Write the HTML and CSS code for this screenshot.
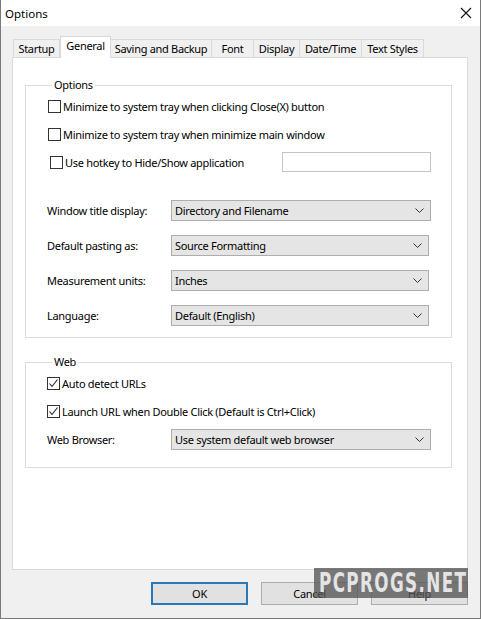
FILE: index.html
```html
<!DOCTYPE html>
<html lang="en">
<head>
	<meta charset="UTF-8">
	<title>Options</title>
	<link rel="stylesheet" href="styles.css">
</head>
<body>

	<!-- Janela de opções -->
	<div class="window">

		<!-- Barra de título -->
		<div class="titlebar">
			<span class="title">Options</span>
			<svg class="close" width="12" height="12" viewBox="0 0 12 12">
				<path d="M1 1 L11 11 M11 1 L1 11" stroke="#111" stroke-width="1.1" fill="none"/>
			</svg>
		</div>

		<div class="body">

			<!-- Abas -->
			<div class="tabs">
				<div class="tab">Startup</div>
				<div class="tab active">General</div>
				<div class="tab">Saving and Backup</div>
				<div class="tab">Font</div>
				<div class="tab">Display</div>
				<div class="tab">Date/Time</div>
				<div class="tab">Text Styles</div>
			</div>

			<div class="panel">

				<!-- Grupo Options -->
				<fieldset class="group group-options">
					<legend>Options</legend>

					<label class="check"><span class="box"></span>Minimize to system tray when clicking Close(X) button</label>
					<label class="check"><span class="box"></span>Minimize to system tray when minimize main window</label>
					<div class="check hotkey">
						<label class="check-inner"><span class="box"></span>Use hotkey to Hide/Show application</label>
						<div class="textbox"></div>
					</div>

					<div class="fields">
						<div class="field">
							<span class="field-label">Window title display:</span>
							<div class="combo"><span>Directory and Filename</span><svg class="chev" width="9" height="5" viewBox="0 0 9 5"><path d="M0.5 0.5 L4.5 4.5 L8.5 0.5" stroke="#333" fill="none"/></svg></div>
						</div>
						<div class="field">
							<span class="field-label">Default pasting as:</span>
							<div class="combo short"><span>Source Formatting</span><svg class="chev" width="9" height="5" viewBox="0 0 9 5"><path d="M0.5 0.5 L4.5 4.5 L8.5 0.5" stroke="#333" fill="none"/></svg></div>
						</div>
						<div class="field">
							<span class="field-label">Measurement units:</span>
							<div class="combo short"><span>Inches</span><svg class="chev" width="9" height="5" viewBox="0 0 9 5"><path d="M0.5 0.5 L4.5 4.5 L8.5 0.5" stroke="#333" fill="none"/></svg></div>
						</div>
						<div class="field">
							<span class="field-label">Language:</span>
							<div class="combo short"><span>Default (English)</span><svg class="chev" width="9" height="5" viewBox="0 0 9 5"><path d="M0.5 0.5 L4.5 4.5 L8.5 0.5" stroke="#333" fill="none"/></svg></div>
						</div>
					</div>
				</fieldset>

				<!-- Grupo Web -->
				<fieldset class="group group-web">
					<legend>Web</legend>

					<label class="check checked"><span class="box"><svg width="11" height="11" viewBox="0 0 11 11"><path d="M1.5 5.5 L4 8.5 L9.5 1.5" stroke="#222" stroke-width="1.1" fill="none"/></svg></span>Auto detect URLs</label>
					<label class="check checked"><span class="box"><svg width="11" height="11" viewBox="0 0 11 11"><path d="M1.5 5.5 L4 8.5 L9.5 1.5" stroke="#222" stroke-width="1.1" fill="none"/></svg></span>Launch URL when Double Click (Default is Ctrl+Click)</label>

					<div class="field">
						<span class="field-label">Web Browser:</span>
						<div class="combo"><span>Use system default web browser</span><svg class="chev" width="9" height="5" viewBox="0 0 9 5"><path d="M0.5 0.5 L4.5 4.5 L8.5 0.5" stroke="#333" fill="none"/></svg></div>
					</div>
				</fieldset>
			</div>

			<!-- Botões -->
			<div class="buttons">
				<div class="button default">OK</div>
				<div class="button">Cancel</div>
				<div class="button">Help</div>
			</div>
		</div>

		<!-- Marca d'água -->
		<div class="watermark"><span>PCPROGS.NET</span></div>
	</div>

</body>
</html>
```

FILE: styles.css
```css
	* {
		box-sizing: border-box;
	}

	body {
		margin: 0;
		font-family: "Noto Sans", "Open Sans", sans-serif;
		font-size: 11px;
		letter-spacing: -0.3px;
		color: #000000;
	}

	div.window {
		position: relative;
		width: 481px;
		height: 619px;
		background-color: #f0f0f0;
		border-left: 1px solid #7a7a7a;
		border-right: 1px solid #7a7a7a;
		border-bottom: 1px solid #7a7a7a;
		overflow: hidden;
	}

	/* barra de título */
	div.titlebar {
		height: 26px;
		background-color: #ffffff;
		display: flex;
		align-items: center;
		justify-content: space-between;
		padding: 0 8px 0 4px;
	}

	span.title {
		font-size: 11.5px;
		letter-spacing: 0;
	}

	div.body {
		padding: 10px 11px 0 11px;
	}

	/* abas */
	div.tabs {
		display: flex;
		align-items: flex-end;
		height: 21px;
		padding-left: 1px;
		position: relative;
		z-index: 1;
	}

	div.tab {
		height: 18px;
		line-height: 18px;
		border: 1px solid #d9d9d9;
		border-bottom: none;
		border-left: none;
		background-color: #f0f0f0;
		white-space: nowrap;
		text-align: center;
	}

	div.tab:first-child {
		border-left: 1px solid #d9d9d9;
	}

	/* larguras das abas */
	div.tab:nth-child(1) { width: 47px; }
	div.tab:nth-child(2) { width: 51px; }
	div.tab:nth-child(3) { width: 101px; }
	div.tab:nth-child(4) { width: 42px; }
	div.tab:nth-child(5) { width: 46px; }
	div.tab:nth-child(6) { width: 62px; }
	div.tab:nth-child(7) { width: 62px; }

	div.tab.active {
		height: 22px;
		line-height: 17px;
		margin-bottom: -1px;
		background-color: #ffffff;
		border-left: 1px solid #d9d9d9;
		position: relative;
	}

	/* painel da aba */
	div.panel {
		width: 456px;
		height: 513px;
		background-color: #ffffff;
		border: 1px solid #d9d9d9;
		padding: 19px 15px 0 12px;
	}

	fieldset.group {
		margin: 0;
		padding: 0 20px 0 21px;
		border: 1px solid #dcdcdc;
	}

	fieldset.group legend {
		margin-left: 5px;
		padding: 0 2px;
		line-height: 16px;
	}

	fieldset.group-options {
		padding-bottom: 4px;
	}

	fieldset.group-web {
		margin-top: 16px;
		padding-bottom: 14px;
	}

	/* caixas de seleção */
	.check {
		display: flex;
		align-items: center;
		height: 28px;
		white-space: nowrap;
	}

	.group-options > .check:first-of-type {
		height: 27px;
	}

	.group-web > .check:first-of-type {
		margin-top: -1px;
	}

	.check-inner {
		display: flex;
		align-items: center;
		padding-left: 2px;
	}

	span.box {
		width: 13px;
		height: 13px;
		border: 1px solid #333333;
		background-color: #ffffff;
		margin: 0 2px 0 1px;
		display: flex;
		align-items: center;
		justify-content: center;
	}

	.check.checked span.box {
		margin-left: 0;
	}

	div.hotkey {
		justify-content: space-between;
		padding-top: 1px;
	}

	div.textbox {
		width: 149px;
		height: 20px;
		border: 1px solid #c4c4c4;
		background-color: #ffffff;
	}

	/* campos com lista */
	div.fields {
		margin-top: 18px;
	}

	div.field {
		display: grid;
		grid-template-columns: 124px 1fr;
		align-items: center;
		height: 35px;
	}

	fieldset.group-web div.field {
		height: 28px;
	}

	div.combo {
		height: 21px;
		background-color: #e5e5e5;
		border: 1px solid #adadad;
		display: flex;
		align-items: center;
		justify-content: space-between;
		padding: 0 6px 0 3px;
	}

	div.combo.short {
		margin-right: 2px;
	}

	/* botões */
	div.buttons {
		display: flex;
		justify-content: flex-end;
		gap: 13px;
		margin-top: 12px;
		padding-right: 1px;
	}

	div.button {
		width: 97px;
		height: 23px;
		line-height: 21px;
		text-align: center;
		background-color: #e1e1e1;
		border: 1px solid #adadad;
	}

	div.button.default {
		border: 2px solid #2a78b6;
		line-height: 19px;
	}

	/* marca d'água sobre o canto */
	div.watermark {
		position: absolute;
		left: 313px;
		top: 568px;
		width: 154px;
		height: 30px;
		background-color: rgba(85, 85, 85, 0.78);
		color: #e4e4e4;
		font-family: "DejaVu Sans Condensed", "DejaVu Sans", sans-serif;
		font-stretch: condensed;
		font-weight: bold;
		font-size: 27px;
		line-height: 30px;
		letter-spacing: 2px;
		white-space: nowrap;
		overflow: hidden;
	}

	div.watermark span {
		display: inline-block;
		transform: scaleX(0.69);
		transform-origin: left center;
		margin-left: 5px;
	}
```
